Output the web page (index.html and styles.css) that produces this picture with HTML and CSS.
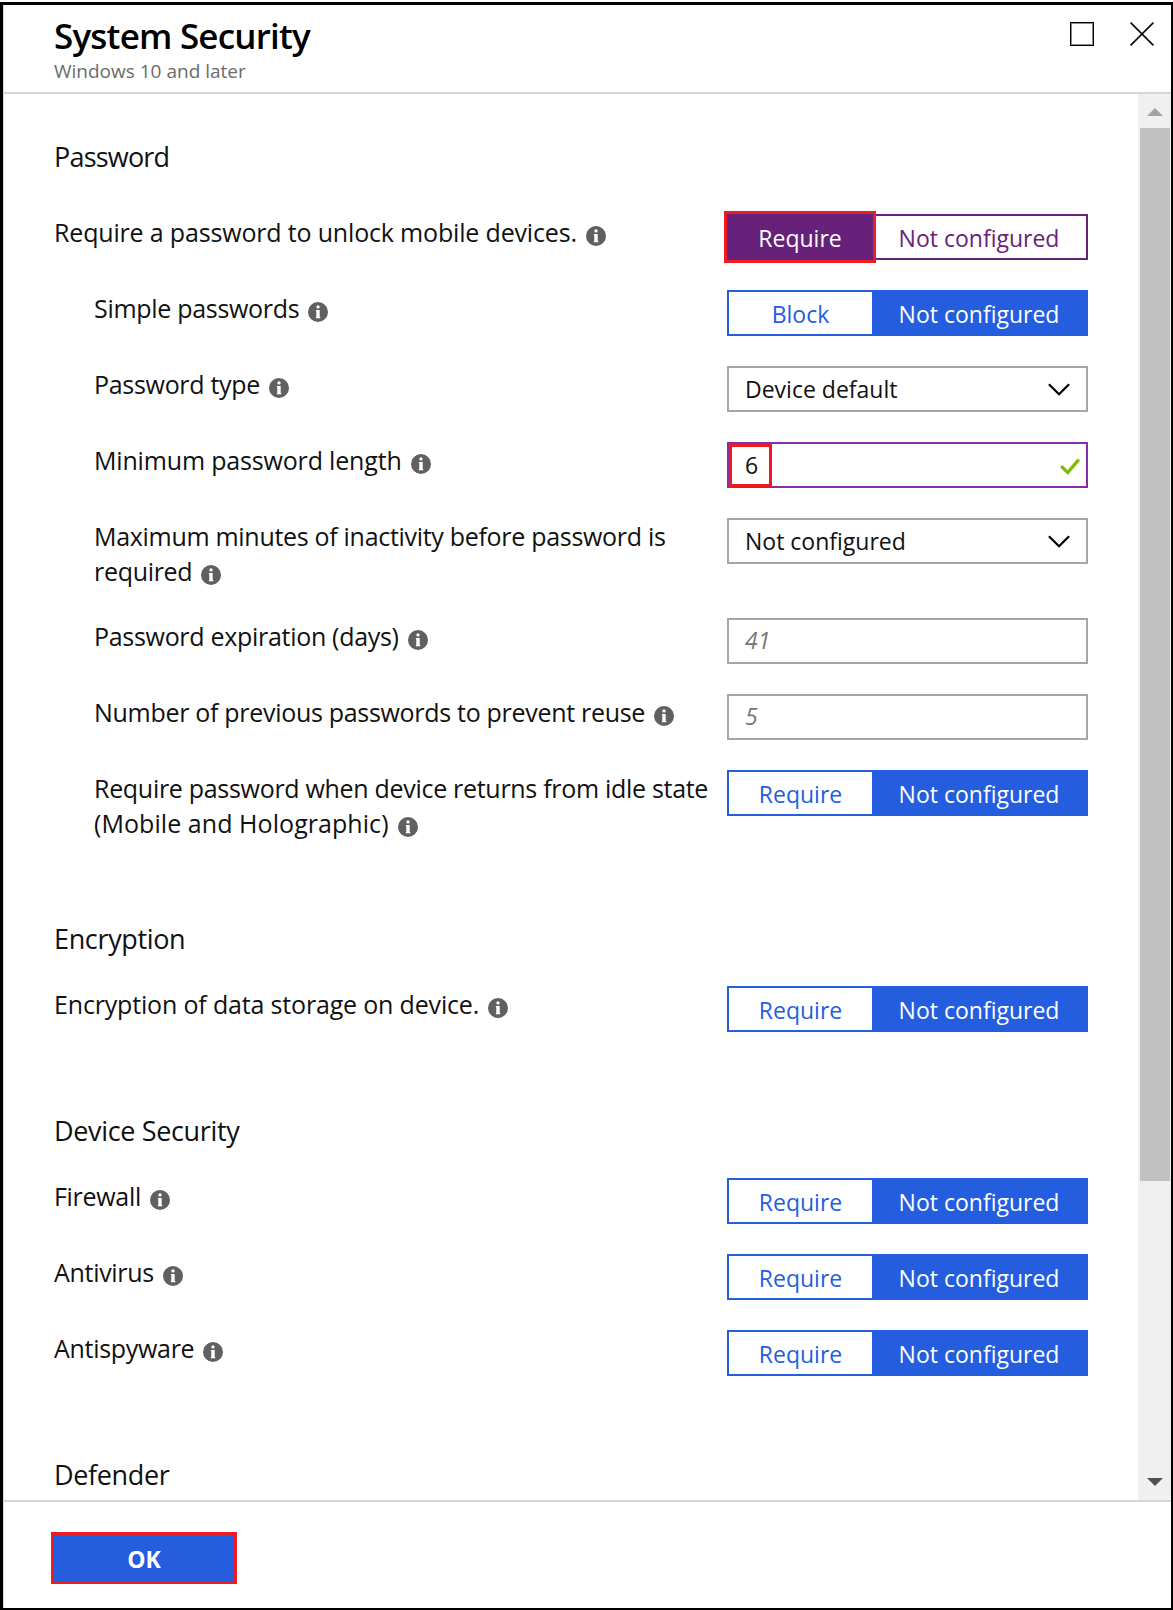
FILE: index.html
```
<!DOCTYPE html>
<html lang="en">
<head>
<meta charset="utf-8">
<title>System Security</title>
<link rel="stylesheet" href="styles.css">
</head>
<body>
<svg class="defs" width="0" height="0" aria-hidden="true">
  <symbol id="info" viewBox="0 0 20 20">
    <circle cx="10" cy="10" r="10" fill="#606060"/>
    <circle cx="10" cy="4.9" r="1.7" fill="#fff"/>
    <path d="M7.9 8h3.8v7h.6v1.2H7.9V15h.4V9.2h-.4z" fill="#fff"/>
  </symbol>
  <symbol id="chevron" viewBox="0 0 22 13">
    <path d="M.9 1.2 11 11.2 21.1 1.2" fill="none" stroke="#000" stroke-width="2.3"/>
  </symbol>
</svg>
<div class="blade">
  <header class="blade-header">
    <div>
      <h1 class="title">System Security</h1>
      <p class="subtitle">Windows 10 and later</p>
    </div>
    <div class="window-buttons">
      <svg width="24" height="24" viewBox="0 0 24 24"><rect x="1.5" y="1.5" width="21" height="21" fill="none" stroke="#8a8a8a"/><rect x=".5" y=".5" width="23" height="23" fill="none" stroke="#000"/></svg>
      <svg width="24" height="24" viewBox="0 0 24 24"><path d="M.6.6l22.8 22.8M23.4.6.6 23.4" stroke="#000" stroke-width="1.5"/></svg>
    </div>
  </header>

  <div class="blade-body">
    <main class="content">
      <section class="section first">
        <h2 class="heading">Password</h2>
        <div class="rows">
          <div class="row">
            <div class="label loose">Require a password to unlock mobile devices.<svg class="info"><use href="#info"/></svg></div>
            <div class="toggle edited"><span class="option on marked">Require</span><span class="option">Not configured</span></div>
          </div>
          <div class="row sub">
            <div class="label">Simple passwords<svg class="info"><use href="#info"/></svg></div>
            <div class="toggle"><span class="option">Block</span><span class="option on">Not configured</span></div>
          </div>
          <div class="row sub">
            <div class="label">Password type<svg class="info"><use href="#info"/></svg></div>
            <div class="field select">Device default<svg class="chevron"><use href="#chevron"/></svg></div>
          </div>
          <div class="row sub">
            <div class="label loose">Minimum password length<svg class="info"><use href="#info"/></svg></div>
            <div class="field valid"><span class="value-mark"></span>6<svg class="check" viewBox="0 0 20 17"><path d="M1.2 8.2 7.7 14.6 18.8 1.6" fill="none" stroke="#7fba00" stroke-width="3.2"/></svg></div>
          </div>
          <div class="row sub">
            <div class="label">Maximum minutes of inactivity before password is required<svg class="info"><use href="#info"/></svg></div>
            <div class="field select">Not configured<svg class="chevron"><use href="#chevron"/></svg></div>
          </div>
          <div class="row sub">
            <div class="label">Password expiration (days)<svg class="info"><use href="#info"/></svg></div>
            <div class="field placeholder">41</div>
          </div>
          <div class="row sub">
            <div class="label">Number of previous passwords to prevent reuse<svg class="info"><use href="#info"/></svg></div>
            <div class="field placeholder">5</div>
          </div>
          <div class="row sub">
            <div class="label">Require password when device returns from idle state <span class="looser">(Mobile and Holographic)</span><svg class="info"><use href="#info"/></svg></div>
            <div class="toggle"><span class="option">Require</span><span class="option on">Not configured</span></div>
          </div>
        </div>
      </section>

      <section class="section">
        <h2 class="heading">Encryption</h2>
        <div class="rows">
          <div class="row">
            <div class="label loose">Encryption of data storage on device.<svg class="info"><use href="#info"/></svg></div>
            <div class="toggle"><span class="option">Require</span><span class="option on">Not configured</span></div>
          </div>
        </div>
      </section>

      <section class="section">
        <h2 class="heading">Device Security</h2>
        <div class="rows">
          <div class="row">
            <div class="label">Firewall<svg class="info"><use href="#info"/></svg></div>
            <div class="toggle"><span class="option">Require</span><span class="option on">Not configured</span></div>
          </div>
          <div class="row">
            <div class="label">Antivirus<svg class="info"><use href="#info"/></svg></div>
            <div class="toggle"><span class="option">Require</span><span class="option on">Not configured</span></div>
          </div>
          <div class="row">
            <div class="label">Antispyware<svg class="info"><use href="#info"/></svg></div>
            <div class="toggle"><span class="option">Require</span><span class="option on">Not configured</span></div>
          </div>
        </div>
      </section>

      <section class="section">
        <h2 class="heading">Defender</h2>
      </section>
    </main>
    <div class="scrollbar">
      <svg class="arrow-up" viewBox="0 0 16 8"><path d="M8 0l8 8H0z" fill="#a3a3a3"/></svg>
      <div class="thumb"></div>
      <svg class="arrow-down" viewBox="0 0 16 8"><path d="M0 0h16L8 8z" fill="#505050"/></svg>
    </div>
  </div>

  <footer class="blade-footer">
    <button class="ok" type="button">OK</button>
  </footer>
</div>
</body>
</html>
```
FILE: styles.css
```
* { box-sizing: border-box; }

body {
  margin: 0;
  padding-top: 2px;
  height: 1610px;
  background: #fff;
  color: #111;
  font-family: "Open Sans", "Noto Sans", sans-serif;
}

h1, h2, p { margin: 0; font-weight: 400; }

.defs { display: none; }

.blade {
  display: flex;
  flex-direction: column;
  height: 1608px;
  border: solid #000;
  border-width: 3px 2px 2px 3px;
}

.blade-header {
  display: flex;
  justify-content: space-between;
  height: 89px;
  padding: 9px 17px 0 50px;
  border-left: 1px solid #d6d6d6;
  border-bottom: 2px solid #d6d6d6;
}

.title {
  font-size: 35px;
  font-weight: 600;
  line-height: 44px;
  letter-spacing: -0.8px;
  color: #000;
}

.subtitle {
  font-size: 19px;
  line-height: 26px;
  color: #6b6b6b;
}

.window-buttons {
  display: flex;
  gap: 36px;
  padding-top: 8px;
}

.blade-body {
  display: flex;
  height: 1406px;
  overflow: hidden;
}

.content {
  flex: 1;
  padding: 42px 50px 0 50px;
  border-left: 1px solid #d6d6d6;
}

.section { margin-top: 78px; }
.section.first { margin-top: 0; }

.heading {
  margin-bottom: 26px;
  font-size: 27px;
  line-height: 42px;
  letter-spacing: -0.35px;
}

.first .heading { margin-bottom: 36px; letter-spacing: -0.8px; }

.rows {
  display: flex;
  flex-direction: column;
  gap: 30px;
}

.row {
  display: grid;
  grid-template-columns: 1fr 361px;
  column-gap: 10px;
  align-items: start;
}

.sub { padding-left: 40px; }

.label {
  margin-bottom: -1px;
  padding-top: 1px;
  font-size: 25px;
  line-height: 35px;
  letter-spacing: -0.3px;
}

.loose { letter-spacing: -0.17px; }
.looser { letter-spacing: 0.06px; }

.info {
  width: 20px;
  height: 20px;
  margin-left: 9px;
  vertical-align: -4px;
}

.toggle {
  display: grid;
  grid-template-columns: 143px 1fr;
  grid-template-rows: 42px;
  height: 46px;
  border: 2px solid #245edf;
  color: #245edf;
  font-size: 23px;
  line-height: 45px;
  text-align: center;
}

.option.on { background: #245edf; color: #fff; }

.edited { border-color: #68217a; color: #68217a; }
.edited .option.on { background: #68217a; }

/* Attention outline drawn over the toggle's own border */
.toggle .marked {
  margin: -5px -4px -5px -5px;
  padding: 2px 0 0;
  border: 3px solid #ed1c24;
}

.field {
  position: relative;
  display: flex;
  align-items: center;
  justify-content: space-between;
  height: 46px;
  padding: 0 16px;
  border: 2px solid #a6a6a6;
  font-size: 23px;
  line-height: 42px;
}

.chevron { width: 22px; height: 13px; }

.valid { padding-right: 6px; border-color: #882da6; }

.value-mark {
  position: absolute;
  left: 0;
  top: 0;
  width: 43px;
  height: 43px;
  border: 3px solid #ed1c24;
}

.check { width: 20px; height: 17px; margin-top: 3px; }

.placeholder { padding-bottom: 2px; color: #767676; font-style: italic; }

.scrollbar {
  display: flex;
  flex-direction: column;
  align-items: center;
  width: 33px;
  background: #f0f0f0;
}

.arrow-up, .arrow-down { width: 16px; height: 8px; }
.arrow-up { margin: 14px 0 12px; }
.arrow-down { margin: auto 0 14px; }

.thumb {
  width: 30px;
  height: 1053px;
  background: #c1c1c1;
}

.blade-footer {
  flex: 1;
  padding: 30px 0 0 47px;
  border-left: 1px solid #d6d6d6;
  border-top: 2px solid #d6d6d6;
}

.ok {
  display: block;
  width: 186px;
  height: 52px;
  padding: 2px 0 0;
  border: 3px solid #ed1c24;
  background: #245edf;
  color: #fff;
  font: 700 23px/44px "Open Sans", "Noto Sans", sans-serif;
}
```
